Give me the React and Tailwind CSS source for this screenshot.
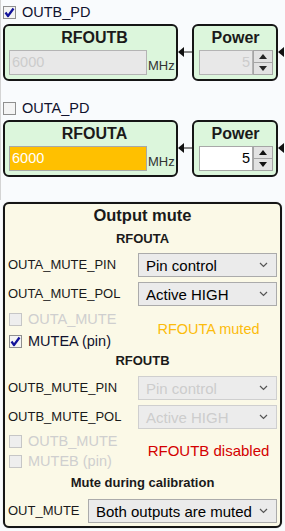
import React from 'react';

const font = { fontFamily: '"Liberation Sans", Arial, sans-serif' };

const CheckBox = ({ checked, disabled }) => (
  <span
    className={`w-[13px] h-[13px] shrink-0 border flex items-center justify-center ${
      disabled ? 'bg-[#eeeeee] border-[#c6c6c6]' : 'bg-[#f4f4f4] border-[#8f8f8f]'
    }`}
  >
    {checked && (
      <svg width="11" height="11" viewBox="0 0 11 11">
        <path d="M1.5 5.5 L4 9 L9.5 1.5" fill="none" stroke="#12129a" strokeWidth="2.2" strokeLinejoin="round" />
      </svg>
    )}
  </span>
);

const Check = ({ label, checked, disabled, className = '' }) => (
  <div className={`flex items-center ${className}`}>
    <CheckBox checked={checked} disabled={disabled} />
    <span className={`ml-[6px] text-[14.5px] leading-none ${disabled ? 'text-[#cfcfcf]' : 'text-[#10122e]'}`}>
      {label}
    </span>
  </div>
);

const ArrowHead = () => (
  <span className="w-0 h-0 border-y-[5px] border-y-transparent border-r-[6px] border-r-[#111]" />
);

const Spinner = ({ disabled }) => (
  <div className="w-[20px] h-[25px] flex flex-col">
    {[0, 1].map(i => (
      <div
        key={i}
        className={`flex-1 flex items-center justify-center border border-[#a5a5a5] bg-[#e2e2e2] ${i === 1 ? '-mt-px' : ''}`}
      >
        <span
          className={`w-0 h-0 border-x-[4px] border-x-transparent ${
            i === 0 ? 'border-b-[5px] border-b-[#111]' : 'border-t-[5px] border-t-[#111]'
          } ${disabled ? 'opacity-90' : ''}`}
        />
      </div>
    ))}
  </div>
);

const OutputModule = ({ name, value, power, disabled }) => (
  <div className="flex h-[57px] pl-[3px]">
    <div className="w-[175px] h-full border-2 border-[#151515] rounded-[6px] bg-[#dcf6dc] pl-[4px]">
      <div className="h-[22px] text-center text-[16px] font-bold leading-[24px] text-[#1a1a1a] pl-[4px]">{name}</div>
      <div className="flex items-end mt-[2px]">
        <div
          className={`w-[138px] h-[25px] border flex items-center pl-[2px] text-[14.5px] ${
            disabled ? 'bg-[#e8e8e8] border-[#b4b4b4] text-[#cccccc]' : 'bg-[#ffc000] border-[#a8a8a8] text-white'
          }`}
        >
          {value}
        </div>
        <span className="ml-px mb-[3px] text-[13px] leading-none text-[#333]">MHz</span>
      </div>
    </div>
    <div className="w-[14px] flex items-center h-[10px] mt-[23px]">
      <ArrowHead />
      <span className="flex-1 h-[2px] bg-[#8a8a8a]" />
    </div>
    <div className="w-[86px] h-full border-2 border-[#151515] rounded-[6px] bg-[#dcf6dc] pl-[5px]">
      <div className="h-[22px] text-center text-[16px] font-bold leading-[24px] text-[#1a1a1a] pr-[4px]">Power</div>
      <div className="flex mt-[2px]">
        <div
          className={`w-[54px] h-[25px] border flex items-center justify-end pr-[2px] text-[14.5px] ${
            disabled ? 'bg-[#e8e8e8] border-[#b4b4b4] text-[#cccccc]' : 'bg-white border-[#a8a8a8] text-black'
          }`}
        >
          {power}
        </div>
        <Spinner disabled={disabled} />
      </div>
    </div>
    <div className="flex items-center h-[10px] mt-[23px]">
      <ArrowHead />
    </div>
  </div>
);

const Chevron = () => (
  <svg width="9" height="6" viewBox="0 0 9 6" className="shrink-0">
    <path d="M1 1 L4.5 4.5 L8 1" fill="none" stroke="#555" strokeWidth="1.2" />
  </svg>
);

const Select = ({ value, disabled, className = '' }) => (
  <div
    className={`h-[24px] border flex items-center justify-between pl-[7px] pr-[8px] text-[15px] ${
      disabled ? 'bg-[#ececec] border-[#cfcfcf] text-[#cdcdcd]' : 'bg-[#ebebeb] border-[#ababab] text-black'
    } ${className}`}
  >
    <span className="leading-none">{value}</span>
    <Chevron />
  </div>
);

const SelectRow = ({ label, value, disabled, className = '' }) => (
  <div className={`flex items-center justify-between pl-[3px] pr-[3px] ${className}`}>
    <span className="text-[13px] text-[#1a1a1a]">{label}</span>
    <Select value={value} disabled={disabled} className="w-[139px]" />
  </div>
);

export default function App() {
  return (
    <div className="w-[285px] h-[531px] bg-[#f9fbfd] overflow-hidden relative" style={font}>
      <div className="absolute left-0 top-0 w-px h-[200px] bg-[#d4d4d4]" />

      <Check label="OUTB_PD" checked className="h-[24px] pl-[3px] pt-px" />
      <OutputModule name="RFOUTB" value="6000" power="5" disabled />

      <Check label="OUTA_PD" className="h-[24px] pl-[3px] mt-[15px] pt-px" />
      <OutputModule name="RFOUTA" value="6000" power="5" />

      <div className="mx-[3px] mt-[25px] h-[326px] border-2 border-[#151515] rounded-[6px] bg-[#fbf9e7] shadow-[0_0_1px_rgba(0,0,0,0.4)]">
        <div className="h-[22px] text-center text-[16.5px] font-bold leading-[22px] text-[#1a1a1a]">Output mute</div>
        <div className="h-[18px] mt-[4px] text-center text-[13px] font-bold leading-[18px] text-[#1a1a1a]">RFOUTA</div>

        <SelectRow label="OUTA_MUTE_PIN" value="Pin control" className="mt-[5px]" />
        <SelectRow label="OUTA_MUTE_POL" value="Active HIGH" className="mt-[5px]" />

        <div className="flex mt-[2px]">
          <div className="w-[134px] pl-[4px]">
            <Check label="OUTA_MUTE" disabled className="h-[22px]" />
            <Check label="MUTEA (pin)" checked className="h-[22px]" />
          </div>
          <div className="w-[139px] flex items-center justify-center text-[14.5px] text-[#fcbc0c]">RFOUTA muted</div>
        </div>

        <div className="h-[18px] text-center text-[13px] font-bold leading-[18px] text-[#1a1a1a]">RFOUTB</div>

        <SelectRow label="OUTB_MUTE_PIN" value="Pin control" disabled className="mt-[6px]" />
        <SelectRow label="OUTB_MUTE_POL" value="Active HIGH" disabled className="mt-[5px]" />

        <div className="flex mt-[2px]">
          <div className="w-[134px] pl-[4px]">
            <Check label="OUTB_MUTE" disabled className="h-[20px]" />
            <Check label="MUTEB (pin)" disabled className="h-[20px]" />
          </div>
          <div className="w-[139px] flex items-center justify-center text-[15px] text-[#d40000] pt-[1px]">RFOUTB disabled</div>
        </div>

        <div className="h-[18px] mt-[3px] text-center text-[13px] font-bold leading-[18px] text-[#1a1a1a]">Mute during calibration</div>

        <div className="flex items-center justify-between pl-[3px] pr-[3px] mt-[7px]">
          <span className="text-[13px] text-[#1a1a1a]">OUT_MUTE</span>
          <Select value="Both outputs are muted" className="w-[189px]" />
        </div>
      </div>
    </div>
  );
}
